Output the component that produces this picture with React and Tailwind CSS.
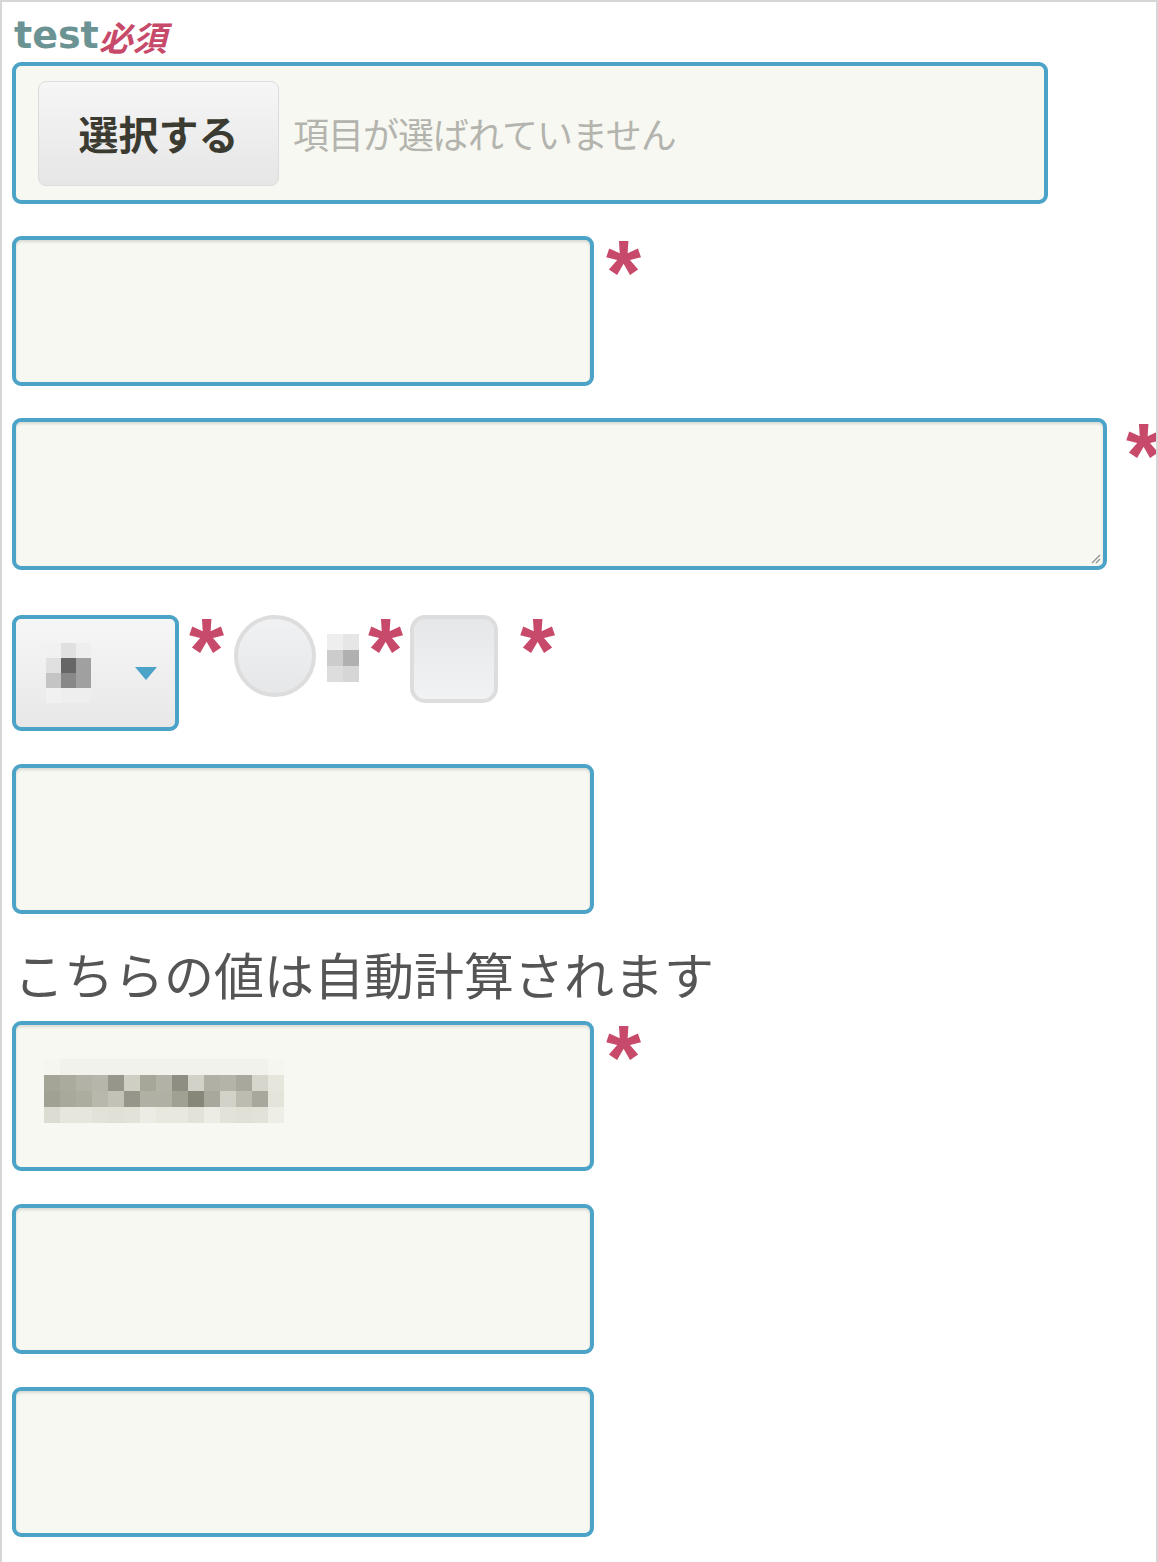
import React from 'react'

const jp = { fontFamily: '"Noto Sans CJK JP", "Noto Sans", sans-serif' }

function Req({ className = '' }) {
  return (
    <span
      className={`block h-[34px] w-[30px] shrink-0 overflow-visible text-[90px] font-bold leading-none text-[#c84a6b] ${className}`}
      style={{ fontFamily: '"Liberation Sans", Arial, sans-serif' }}
    >
      <span className="block -translate-y-[14px]">*</span>
    </span>
  )
}

function Mosaic({ rows, cell }) {
  return (
    <div className="flex flex-col">
      {rows.map((row, r) => (
        <div key={r} className="flex">
          {row.map((c, i) => (
            <span key={i} className="block" style={{ width: cell, height: cell, background: c }} />
          ))}
        </div>
      ))}
    </div>
  )
}

function Box({ children }) {
  return (
    <div className="h-[150px] w-[582px] shrink-0 rounded-[9px] border-[4px] border-[#4ba3c7] bg-[#f8f8f2] shadow-[inset_0_2px_3px_rgba(0,0,0,0.12)]">
      {children}
    </div>
  )
}

export default function App() {
  return (
    <div className="min-h-[1562px] w-[1158px] overflow-hidden border-l-2 border-r-2 border-t-2 border-[#d6d6d6] bg-white pl-[10px]" style={jp}>
      <div className="flex h-[60px] items-end pb-[8px] pl-[2px]">
        <span className="text-[38px] font-bold leading-none text-[#6b9394]" style={{ fontFamily: '"DejaVu Sans", sans-serif' }}>test</span>
        <span className="text-[34px] font-bold italic leading-none text-[#c84a6b]">必須</span>
      </div>

      <div className="flex h-[142px] w-[1036px] items-center rounded-[9px] border-[4px] border-[#4ba3c7] bg-[#f8f8f2] pl-[22px]">
        <div className="flex h-[105px] w-[241px] items-center justify-center rounded-[8px] border border-[#dcdcdc] bg-gradient-to-b from-[#f6f6f6] to-[#e6e6e6] text-[40px] font-bold text-[#3b3b32]">
          選択する
        </div>
        <span className="ml-[14px] text-[36px] tracking-[-1px] text-[#b4b4ae]">項目が選ばれていません</span>
      </div>

      <div className="mt-[32px] flex items-start">
        <Box />
        <Req className="ml-[12px] mt-[6px]" />
      </div>

      <div className="mt-[32px] flex items-start">
        <div className="relative h-[152px] w-[1095px] shrink-0 rounded-[9px] border-[4px] border-[#4ba3c7] bg-[#f8f8f2] shadow-[inset_0_2px_3px_rgba(0,0,0,0.12)]">
          <svg className="absolute bottom-[2px] right-[2px]" width="12" height="12" viewBox="0 0 12 12">
            <path d="M11 3 L3 11 M11 7 L7 11" stroke="#999" strokeWidth="1.5" />
          </svg>
        </div>
        <Req className="ml-[19px] mt-[7px]" />
      </div>

      <div className="mt-[45px] flex items-start">
        <div className="flex h-[116px] w-[167px] shrink-0 items-center rounded-[9px] border-[4px] border-[#4ba3c7] bg-gradient-to-b from-[#f6f6f6] to-[#e8e8e8] pl-[30px]">
          <Mosaic
            cell="15px"
            rows={[
              ['#f1f1f1', '#e0e0e0', '#eeeeee'],
              ['#e0e0e0', '#666666', '#a0a0a0'],
              ['#c4c4c4', '#888888', '#a0a0a0'],
              ['#f1f1f1', '#eeeeee', '#eeeeee'],
            ]}
          />
          <svg className="ml-[44px]" width="22" height="13" viewBox="0 0 22 13">
            <path d="M0 0 H22 L11 13 Z" fill="#4ba3c7" />
          </svg>
        </div>
        <Req className="ml-[10px] mt-[5px]" />
        <div className="ml-[15px] h-[82px] w-[82px] shrink-0 rounded-full border-[4px] border-[#dddddd] bg-gradient-to-b from-[#f0f1f2] to-[#e6e7e8]" />
        <div className="ml-[11px] mt-[19px]">
          <Mosaic
            cell="16px"
            rows={[
              ['#eeeeee', '#e6e6e6'],
              ['#cccccc', '#b0b0b0'],
              ['#dddddd', '#d6d6d6'],
            ]}
          />
        </div>
        <Req className="ml-[9px] mt-[5px]" />
        <div className="ml-[12px] h-[88px] w-[88px] shrink-0 rounded-[15px] border-[4px] border-[#dddddd] bg-gradient-to-b from-[#e6e7e8] to-[#f1f2f3]" />
        <Req className="ml-[22px] mt-[5px]" />
      </div>

      <div className="mt-[33px]">
        <Box />
      </div>

      <div className="mt-[34px] h-[73px] pl-[2px] text-[50px] leading-none text-[#555555]">
        こちらの値は自動計算されます
      </div>

      <div className="flex items-start">
        <Box>
          <div className="pl-[28px] pt-[34px]">
            <Mosaic
              cell="16px"
              rows={[
                ['#f6f6f0', '#f2f2ec', '#f2f2ec', '#f2f2ec', '#f2f2ec', '#f2f2ec', '#f2f2ec', '#f2f2ec', '#f2f2ec', '#f2f2ec', '#f2f2ec', '#f2f2ec', '#f2f2ec', '#f2f2ec', '#f6f6f0'],
                ['#a4a497', '#aaaa9d', '#b2b2a6', '#b6b6aa', '#96968a', '#cfcfc4', '#a6a699', '#b2b2a6', '#8e8e82', '#d2d2c8', '#b0b0a4', '#b4b4a8', '#a8a89c', '#d6d6cc', '#e6e6dc'],
                ['#a0a093', '#a8a89b', '#acac9f', '#b8b8ac', '#c2c2b6', '#96968a', '#b0b0a4', '#b0b0a4', '#a0a093', '#868679', '#a8a89c', '#d2d2c8', '#bcbcb0', '#a8a89c', '#e4e4da'],
                ['#dcdcd2', '#e6e6dc', '#e6e6dc', '#e2e2d8', '#e0e0d6', '#e2e2d8', '#ececE4', '#e8e8de', '#e8e8de', '#e2e2d8', '#ececE4', '#e2e2d8', '#e0e0d6', '#e2e2d8', '#eeeee6'],
              ]}
            />
          </div>
        </Box>
        <Req className="ml-[12px] mt-[6px]" />
      </div>

      <div className="mt-[33px]">
        <Box />
      </div>

      <div className="mt-[33px]">
        <Box />
      </div>
    </div>
  )
}
